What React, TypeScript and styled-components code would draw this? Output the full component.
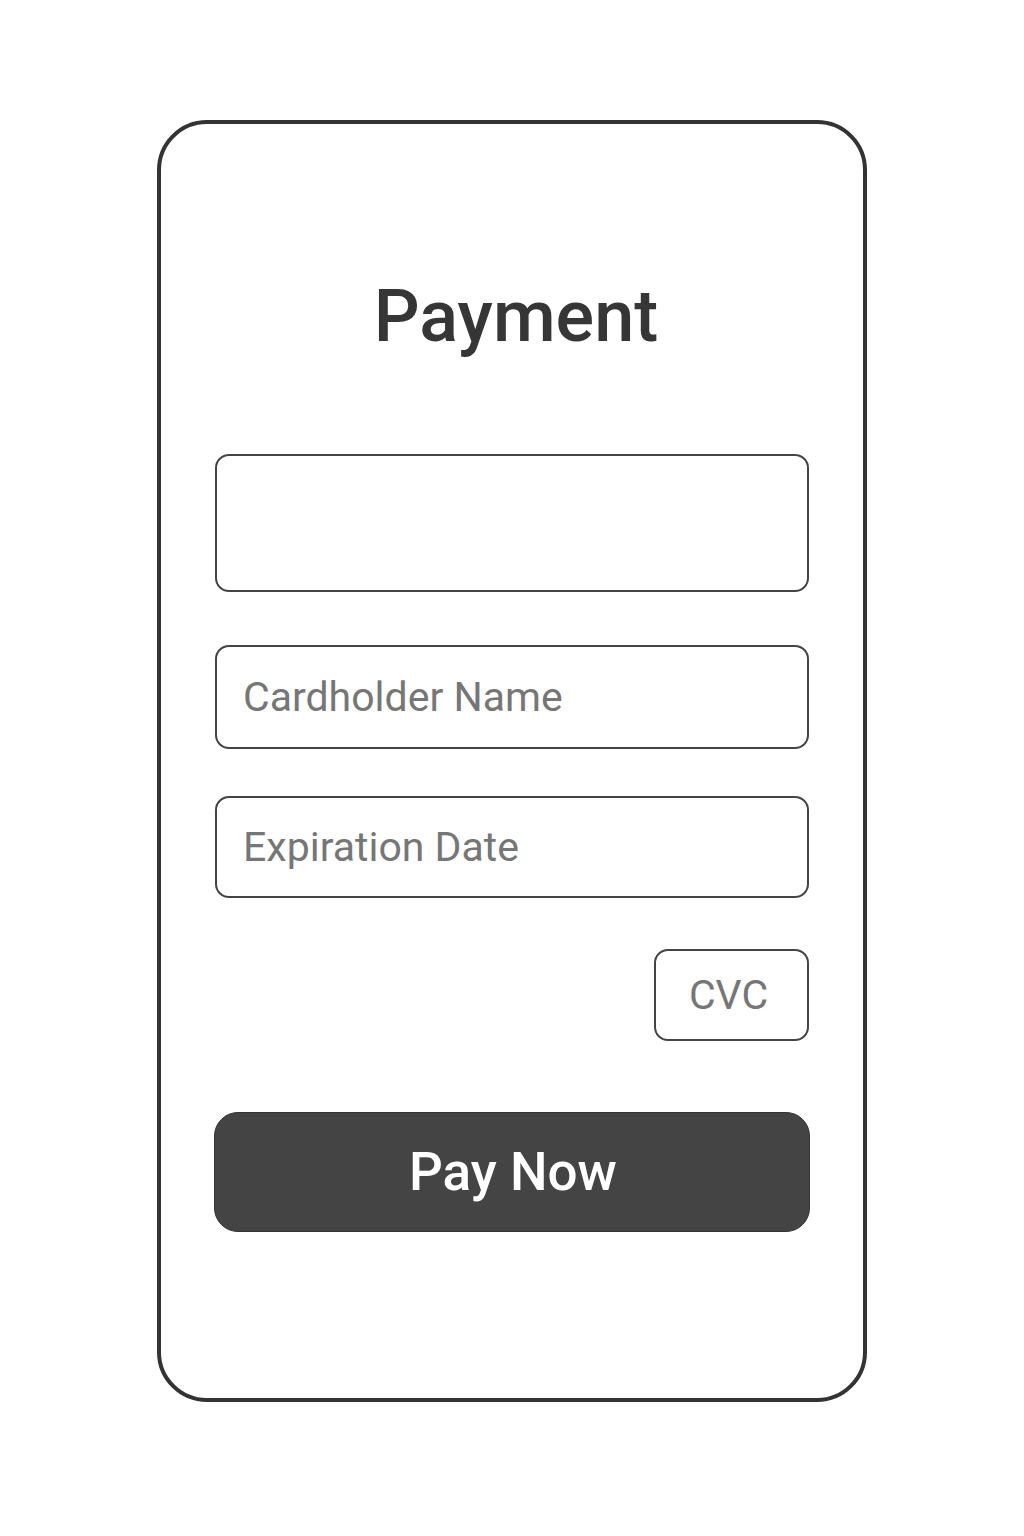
import React from "react";
import styled, { createGlobalStyle } from "styled-components";

const Global = createGlobalStyle`
  html, body { margin: 0; padding: 0; background: #ffffff; }
  body { font-family: Roboto, "Noto Sans", "Liberation Sans", sans-serif; }
  * { box-sizing: border-box; }
`;

const Page = styled.div`
  width: 1024px;
  height: 1536px;
  display: flex;
  justify-content: center;
  padding-top: 120px;
`;

const Card = styled.div`
  width: 710px;
  height: 1282px;
  border: 4px solid #333333;
  border-radius: 50px;
  padding: 153px 54px 0 54px;
  display: flex;
  flex-direction: column;
  background: #ffffff;
`;

const Title = styled.h1`
  margin: 0;
  text-align: center;
  font-size: 72px;
  font-weight: 500;
  color: #363636;
  line-height: 80px;
  padding-left: 8px;
`;

const Field = styled.input<{ $h: number; $mt: number }>`
  display: block;
  width: 100%;
  height: ${(p) => p.$h}px;
  margin-top: ${(p) => p.$mt}px;
  border: 2px solid #444444;
  border-radius: 14px;
  background: #ffffff;
  padding: 0 0 0 26px;
  font-family: Roboto, "Noto Sans", "Liberation Sans", sans-serif;
  font-size: 41px;
  color: #333333;
  outline: none;
  &::placeholder { color: #767676; opacity: 1; }
`;

const Row = styled.div`
  display: flex;
  justify-content: flex-end;
  margin-top: 51px;
`;

const Cvc = styled.input`
  display: block;
  width: 155px;
  height: 92px;
  border: 2px solid #444444;
  border-radius: 14px;
  background: #ffffff;
  text-align: center;
  font-family: Roboto, "Noto Sans", "Liberation Sans", sans-serif;
  font-size: 41px;
  color: #333333;
  outline: none;
  padding: 0 6px 0 0;
  &::placeholder { color: #767676; opacity: 1; }
`;

const PayButton = styled.button`
  margin-top: 71px;
  margin-left: -1px;
  width: 596px;
  height: 120px;
  border: 1px solid #333333;
  border-radius: 24px;
  background: #444444;
  color: #ffffff;
  font-family: Roboto, "Noto Sans", "Liberation Sans", sans-serif;
  font-size: 53px;
  font-weight: 500;
  cursor: pointer;
  padding: 0 0 0 2px;
`;

export default function App() {
  return (
    <>
      <Global />
      <Page>
        <Card>
          <Title>Payment</Title>
          <Field $h={138} $mt={97} aria-label="Card Number" />
          <Field $h={104} $mt={53} placeholder="Cardholder Name" />
          <Field $h={102} $mt={47} placeholder="Expiration Date" />
          <Row>
            <Cvc placeholder="CVC" />
          </Row>
          <PayButton>Pay Now</PayButton>
        </Card>
      </Page>
    </>
  );
}
